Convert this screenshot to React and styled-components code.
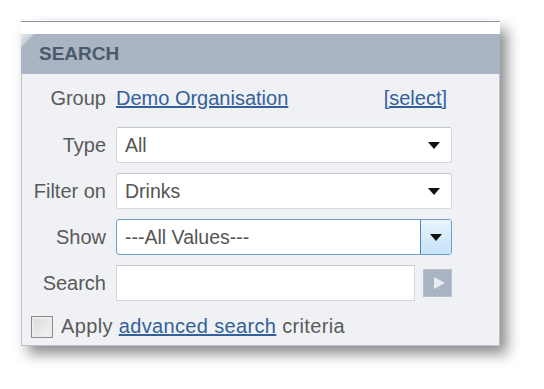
import React from 'react';
import styled, { createGlobalStyle } from 'styled-components';

const Global = createGlobalStyle`
  html, body {
    margin: 0;
    background: #ffffff;
    font-family: "Liberation Sans", Arial, sans-serif;
  }
`

const Page = styled.div`
  padding: 21px 0 40px 21px;
`

const Panel = styled.div`
  width: 479px;
  border-top: 1px solid #8a97a8;
  box-shadow: 7px 8px 13px rgba(0, 0, 0, 0.45);
`

const TopStrip = styled.div`
  height: 12px;
  background: #ffffff;
`

const Header = styled.div`
  position: relative;
  height: 40px;
  display: flex;
  align-items: center;
  padding-left: 18px;
  background: #aab4c2;
  color: #4c596c;
  font-size: 19px;
  font-weight: bold;
  overflow: hidden;

  &::before {
    content: '';
    position: absolute;
    left: 0;
    top: 0;
    width: 14px;
    height: 14px;
    background: linear-gradient(135deg, #e4e8ee 0%, #c9d0da 45%, transparent 50%);
  }
`

const Body = styled.div`
  background: #eff1f5;
  border: 1px solid #bcc4cf;
  border-top: none;
  padding: 5px 47px 0 8px;
  display: flex;
  flex-direction: column;
  gap: 10px;
`

const Row = styled.div`
  display: flex;
  align-items: center;
  height: 36px;
`

const GroupRow = styled(Row)`
  height: 38px;
`

const Label = styled.span`
  width: 76px;
  margin-right: 10px;
  text-align: right;
  color: #5a5a5a;
  font-size: 20px;
  white-space: nowrap;
`

const Link = styled.a`
  color: #34609a;
  text-decoration: underline;
  font-size: 20px;
  margin-right: ${p => p.$inset || 0}px;
  cursor: pointer;
`

const Spacer = styled.span`
  flex: 1;
`

const SelectBox = styled.div`
  flex: 1;
  height: 36px;
  box-sizing: border-box;
  display: flex;
  align-items: center;
  background: #ffffff;
  border: 1px solid ${p => (p.$focused ? '#6e9fd2' : '#d3d7dd')};
  border-top-color: ${p => (p.$focused ? '#6e9fd2' : '#c2c6cc')};
  border-radius: 3px;
  color: #555555;
  font-size: 19.5px;
  overflow: hidden;
`

const SelectText = styled.span`
  flex: 1;
  padding-left: 8px;
`

const ArrowArea = styled.div`
  width: ${p => (p.$focused ? '30px' : '34px')};
  align-self: stretch;
  display: flex;
  align-items: center;
  justify-content: center;
  background: ${p => (p.$focused ? 'linear-gradient(#eaf5fd, #c4e3f9)' : 'transparent')};
  border-left: ${p => (p.$focused ? '1px solid #4f86c0' : 'none')};
`

const Arrow = styled.span`
  width: 0;
  height: 0;
  border-left: 6px solid transparent;
  border-right: 6px solid transparent;
  border-top: 7px solid #111111;
`

const TextInput = styled.input`
  flex: 1;
  height: 36px;
  box-sizing: border-box;
  border: 1px solid #d3d7dd;
  border-top-color: #c2c6cc;
  background: #ffffff;
  font-size: 19px;
  margin: 0 8px 0 0;
  outline: none;
`

const GoButton = styled.button`
  width: 29px;
  height: 28px;
  padding: 0;
  border: 1px solid #b8c0cb;
  background: #a9b3c1;
  display: flex;
  align-items: center;
  justify-content: center;
  cursor: pointer;
`

const Play = styled.span`
  width: 0;
  height: 0;
  border-top: 6.5px solid transparent;
  border-bottom: 6.5px solid transparent;
  border-left: 11px solid #e8ecf1;
  margin-left: 3px;
`

const CheckRow = styled.label`
  display: flex;
  align-items: center;
  height: 31px;
  color: #5a5a5a;
  font-size: 20px;
  letter-spacing: 0.35px;
  padding-left: 1px;
  padding-bottom: 3px;
`

const CheckBox = styled.span`
  width: 20px;
  height: 20px;
  border: 1px solid #8c8c8c;
  background: linear-gradient(135deg, #d8d8d8, #f6f6f6);
  box-shadow: inset 0 0 0 2px #ececec;
  margin-right: 8px;
`

const Select = ({ value, focused }) => (
  <SelectBox $focused={focused}>
    <SelectText>{value}</SelectText>
    <ArrowArea $focused={focused}>
      <Arrow />
    </ArrowArea>
  </SelectBox>
)

const App = () => {
  return (
    <Page>
      <Global />
      <Panel>
        <TopStrip />
        <Header>SEARCH</Header>
        <Body>
          <GroupRow>
            <Label>Group</Label>
            <Link>Demo Organisation</Link>
            <Spacer />
            <Link $inset={5}>[select]</Link>
          </GroupRow>
          <Row>
            <Label>Type</Label>
            <Select value="All" />
          </Row>
          <Row>
            <Label>Filter on</Label>
            <Select value="Drinks" />
          </Row>
          <Row>
            <Label>Show</Label>
            <Select value="---All Values---" focused />
          </Row>
          <Row>
            <Label>Search</Label>
            <TextInput />
            <GoButton>
              <Play />
            </GoButton>
          </Row>
          <CheckRow>
            <CheckBox />
            Apply&nbsp;<Link>advanced search</Link>&nbsp;criteria
          </CheckRow>
        </Body>
      </Panel>
    </Page>
  )
}

export default App;
